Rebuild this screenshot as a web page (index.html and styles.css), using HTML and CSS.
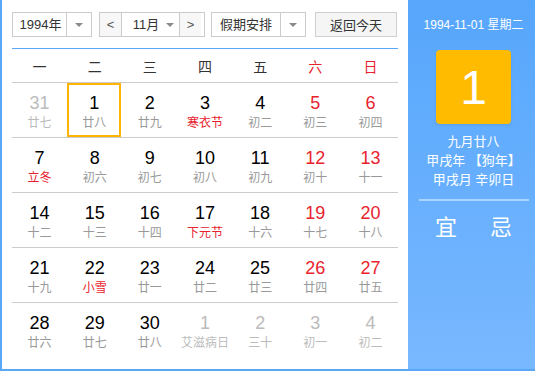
FILE: index.html
```html
<!DOCTYPE html>
<html lang="zh-CN">
<head>
    <meta charset="UTF-8">
    <title>万年历</title>
    <link rel="stylesheet" href="styles.css">
</head>
<body>
    <div class="calendar">
        <!-- 左侧日历 -->
        <div class="main">
            <div class="toolbar">
                <div class="select year-select">
                    <span class="select-text">1994年</span>
                    <span class="select-arrow"><i class="caret"></i></span>
                </div>
                <div class="select month-select">
                    <span class="nav-btn">&lt;</span>
                    <span class="select-text">11月</span>
                    <span class="inner-arrow"><i class="caret"></i></span>
                    <span class="nav-btn next">&gt;</span>
                </div>
                <div class="select holiday-select">
                    <span class="select-text">假期安排</span>
                    <span class="select-arrow"><i class="caret"></i></span>
                </div>
                <button class="today-btn">返回今天</button>
            </div>

            <div class="week-head">
                <span>一</span><span>二</span><span>三</span><span>四</span><span>五</span>
                <span class="weekend">六</span><span class="weekend">日</span>
            </div>

            <div class="days">
                <div class="row">
                    <div class="day other"><b>31</b><small>廿七</small></div>
                    <div class="day selected"><b>1</b><small>廿八</small></div>
                    <div class="day"><b>2</b><small>廿九</small></div>
                    <div class="day"><b>3</b><small class="fest">寒衣节</small></div>
                    <div class="day"><b>4</b><small>初二</small></div>
                    <div class="day weekend"><b>5</b><small>初三</small></div>
                    <div class="day weekend"><b>6</b><small>初四</small></div>
                </div>
                <div class="row">
                    <div class="day"><b>7</b><small class="fest">立冬</small></div>
                    <div class="day"><b>8</b><small>初六</small></div>
                    <div class="day"><b>9</b><small>初七</small></div>
                    <div class="day"><b>10</b><small>初八</small></div>
                    <div class="day"><b>11</b><small>初九</small></div>
                    <div class="day weekend"><b>12</b><small>初十</small></div>
                    <div class="day weekend"><b>13</b><small>十一</small></div>
                </div>
                <div class="row">
                    <div class="day"><b>14</b><small>十二</small></div>
                    <div class="day"><b>15</b><small>十三</small></div>
                    <div class="day"><b>16</b><small>十四</small></div>
                    <div class="day"><b>17</b><small class="fest">下元节</small></div>
                    <div class="day"><b>18</b><small>十六</small></div>
                    <div class="day weekend"><b>19</b><small>十七</small></div>
                    <div class="day weekend"><b>20</b><small>十八</small></div>
                </div>
                <div class="row">
                    <div class="day"><b>21</b><small>十九</small></div>
                    <div class="day"><b>22</b><small class="fest">小雪</small></div>
                    <div class="day"><b>23</b><small>廿一</small></div>
                    <div class="day"><b>24</b><small>廿二</small></div>
                    <div class="day"><b>25</b><small>廿三</small></div>
                    <div class="day weekend"><b>26</b><small>廿四</small></div>
                    <div class="day weekend"><b>27</b><small>廿五</small></div>
                </div>
                <div class="row">
                    <div class="day"><b>28</b><small>廿六</small></div>
                    <div class="day"><b>29</b><small>廿七</small></div>
                    <div class="day"><b>30</b><small>廿八</small></div>
                    <div class="day other"><b>1</b><small>艾滋病日</small></div>
                    <div class="day other"><b>2</b><small>三十</small></div>
                    <div class="day other"><b>3</b><small>初一</small></div>
                    <div class="day other"><b>4</b><small>初二</small></div>
                </div>
            </div>
        </div>

        <!-- 右侧详情 -->
        <div class="side">
            <div class="side-date">1994-11-01 星期二</div>
            <div class="big-day">1</div>
            <div class="lunar">
                <p>九月廿八</p>
                <p>甲戌年 【狗年】</p>
                <p>甲戌月 辛卯日</p>
            </div>
            <div class="divider"></div>
            <div class="yiji">
                <span>宜</span><span>忌</span>
            </div>
        </div>
    </div>
</body>
</html>
```

FILE: styles.css
```css
/* 基础 */
body {
    margin: 0;
    font-family: 'Liberation Sans', 'Noto Sans CJK SC', sans-serif;
    color: #333;
    background: #fff;
}

.calendar {
    display: flex;
    width: 533px;
    height: 369px;
    border-left: 2px solid #5aa7f8;
    border-bottom: 2px solid #5aa7f8;
}

/* 左侧 */
.main {
    width: 386px;
    padding: 12px 10px 0 10px;
    background: #fff;
}

.toolbar {
    display: flex;
    height: 25px;
    font-size: 13px;
}

.select {
    display: flex;
    box-sizing: border-box;
    height: 25px;
    border: 1px solid #cbcbcb;
    background: #fff;
    line-height: 23px;
}

.select-text {
    flex: 1;
    text-align: center;
}

.select-arrow {
    width: 24px;
    border-left: 1px solid #cbcbcb;
    display: flex;
    align-items: center;
    justify-content: center;
}

.caret {
    display: block;
    width: 0;
    height: 0;
    border-left: 4px solid transparent;
    border-right: 4px solid transparent;
    border-top: 4px solid #8a8a8a;
}

.year-select {
    width: 80px;
}

.year-select .select-text {
    padding-left: 2px;
}

.month-select {
    width: 106px;
    margin-left: 7px;
}

.month-select .select-text {
    flex: none;
    width: 30px;
    padding-left: 9px;
}

.inner-arrow {
    width: 18px;
    display: flex;
    align-items: center;
    justify-content: center;
}

.nav-btn {
    width: 21px;
    text-align: center;
    color: #555;
    background: #f7f7f7;
    border-right: 1px solid #cbcbcb;
}

.nav-btn.next {
    border-right: none;
    border-left: 1px solid #cbcbcb;
}

.holiday-select {
    width: 95px;
    margin-left: 6px;
}

.today-btn {
    width: 82px;
    height: 25px;
    margin-left: 9px;
    padding: 0;
    font-family: inherit;
    font-size: 13px;
    color: #333;
    background: #f5f5f5;
    border: 1px solid #cfcfcf;
}

/* 星期 */
.week-head {
    display: grid;
    grid-template-columns: repeat(7, 1fr);
    margin-top: 11px;
    border-top: 1px solid #5aa7f8;
    border-bottom: 1px solid #cccccc;
    height: 33px;
    line-height: 36px;
    font-size: 14px;
    text-align: center;
    color: #333;
}

.week-head .weekend {
    color: #e8232e;
}

/* 日期格 */
.row {
    display: grid;
    grid-template-columns: repeat(7, 1fr);
    height: 55px;
    border-bottom: 1px solid #cccccc;
    box-sizing: border-box;
}

.row:last-child {
    border-bottom: none;
}

.day {
    box-sizing: border-box;
    padding-top: 10px;
    text-align: center;
}

.day b {
    display: block;
    font-weight: normal;
    font-size: 18px;
    line-height: 20px;
    color: #000;
}

.day small {
    display: block;
    font-size: 12px;
    line-height: 20px;
    color: #999;
}

.day.weekend b {
    color: #e8232e;
}

.day small.fest {
    color: #e8232e;
}

.day.other b {
    color: #bbbbbb;
}

.day.other small {
    color: #bbbbbb;
}

.day.selected {
    border: 2px solid #ffb400;
    padding-top: 8px;
    margin-right: 1px;
}

/* 右侧 */
.side {
    flex: 1;
    padding-left: 4px;
    background: linear-gradient(to bottom, #56a6fc, #78b8ff);
    color: #fff;
    text-align: center;
}

.side-date {
    margin-top: 16px;
    font-size: 12px;
    line-height: 18px;
}

.big-day {
    width: 75px;
    height: 74px;
    margin: 16px auto 0;
    background: #ffbb00;
    border-radius: 4px;
    font-size: 48px;
    line-height: 76px;
    box-shadow: 0 1px 3px rgba(0, 0, 0, 0.08);
}

.lunar {
    margin-top: 8px;
    font-size: 13px;
}

.lunar p {
    margin: 0;
    line-height: 19px;
}

.divider {
    width: 110px;
    height: 2px;
    margin: 10px auto 0;
    background: rgba(255, 255, 255, 0.45);
}

.yiji {
    display: flex;
    justify-content: center;
    margin-top: 14px;
    font-size: 22px;
    line-height: 26px;
}

.yiji span {
    width: 55px;
}
```
